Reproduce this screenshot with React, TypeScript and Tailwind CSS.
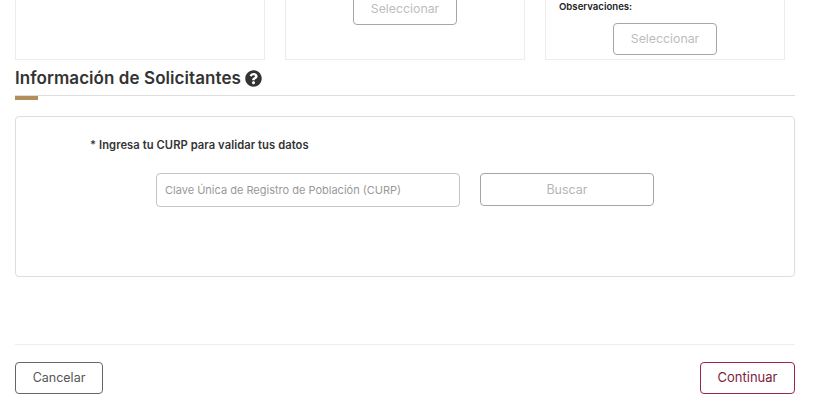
function SelectButton() {
  return (
    <button className="h-8 w-[104px] rounded border border-[#a6a6a6] bg-white pt-px text-[12.300px] text-[#bdbdbd]">
      Seleccionar
    </button>
  );
}

function App() {
  return (
    <div className="h-[410px] w-[830px] overflow-hidden bg-white px-[15px] font-['Inter',sans-serif] text-[#333]">
      <div className="w-[780px]">
        <div className="flex h-[60px] items-end gap-5 overflow-hidden">
          <div className="h-[100px] w-[250px] border border-[#ececec]" />
          <div className="flex h-[100px] w-[240px] flex-col items-center justify-end border border-[#ececec] pb-[34px]">
            <SelectButton />
          </div>
          <div className="flex h-[100px] w-[240px] flex-col justify-end border border-[#ececec] pb-1">
            <p className="mb-[10px] pl-[13px] text-[9.600px] leading-3 font-semibold text-[#222]">
              Observaciones:
            </p>
            <div className="flex justify-center">
              <SelectButton />
            </div>
          </div>
        </div>

        <div className="mt-2 flex h-[22px] items-center gap-1">
          <h2 className="-mt-0.5 text-[17px] leading-[22px] font-semibold tracking-[0.07px] text-[#333]">
            Información de Solicitantes
          </h2>
          <svg viewBox="0 0 512 512" className="-mt-0.5 h-[17px] w-[17px]" fill="#333">
            <path d="M504 256c0 137-111 248-248 248S8 393 8 256C8 119 119 8 256 8s248 111 248 248zM262.700 90c-54.500 0-89.300 23-116.500 63.800-3.500 5.300-2.400 12.400 2.700 16.300l34.700 26.300c5.200 3.900 12.600 3 16.700-2.100 17.900-22.700 30.100-35.800 57.300-35.800 20.400 0 45.700 13.100 45.700 32.900 0 15-12.400 22.700-32.600 34-23.600 13.200-54.800 29.700-54.800 70.900V300c0 6.600 5.400 12 12 12h56c6.600 0 12-5.400 12-12v-1.300c0-28.600 83.500-29.800 83.500-107.100C380 133.400 319.600 90 262.700 90zM256 339c-25.400 0-46 20.600-46 46s20.600 46 46 46 46-20.600 46-46-20.600-46-46-46z" />
          </svg>
        </div>
        <div className="mt-[5px] h-[5px] border-t border-[#ddd]">
          <div className="h-1 w-[23px] bg-[#b38e5d]" />
        </div>

        <div className="mt-4 h-[161px] rounded-sm border border-[#ddd] pt-[21px]">
          <p className="pl-[74px] text-[11.200px] leading-[14px] font-semibold tracking-[0.07px] text-[#333]">
            * Ingresa tu CURP para validar tus datos
          </p>
          <div className="mt-[21px] flex gap-5 pl-[140px]">
            <input
              readOnly
              placeholder="Clave Única de Registro de Población (CURP)"
              className="h-[34px] w-[304px] rounded border border-[#c4c4c4] bg-white px-2 text-[11px] placeholder:text-[#999]"
            />
            <button className="h-[33px] w-[174px] rounded border border-[#a6a6a6] bg-white pt-0.5 text-[12.500px] text-[#b5b5b5]">
              Buscar
            </button>
          </div>
        </div>

        <div className="mt-[67px] flex items-center justify-between border-t border-[#eee] pt-[17px]">
          <button className="h-8 w-[88px] rounded border border-[#666] bg-white text-[12.500px] text-[#555]">
            Cancelar
          </button>
          <button className="h-8 w-[95px] rounded border border-[#9d2449] bg-white text-[13px] text-[#7d1d3a]">
            Continuar
          </button>
        </div>
      </div>
    </div>
  );
}

export default App;
